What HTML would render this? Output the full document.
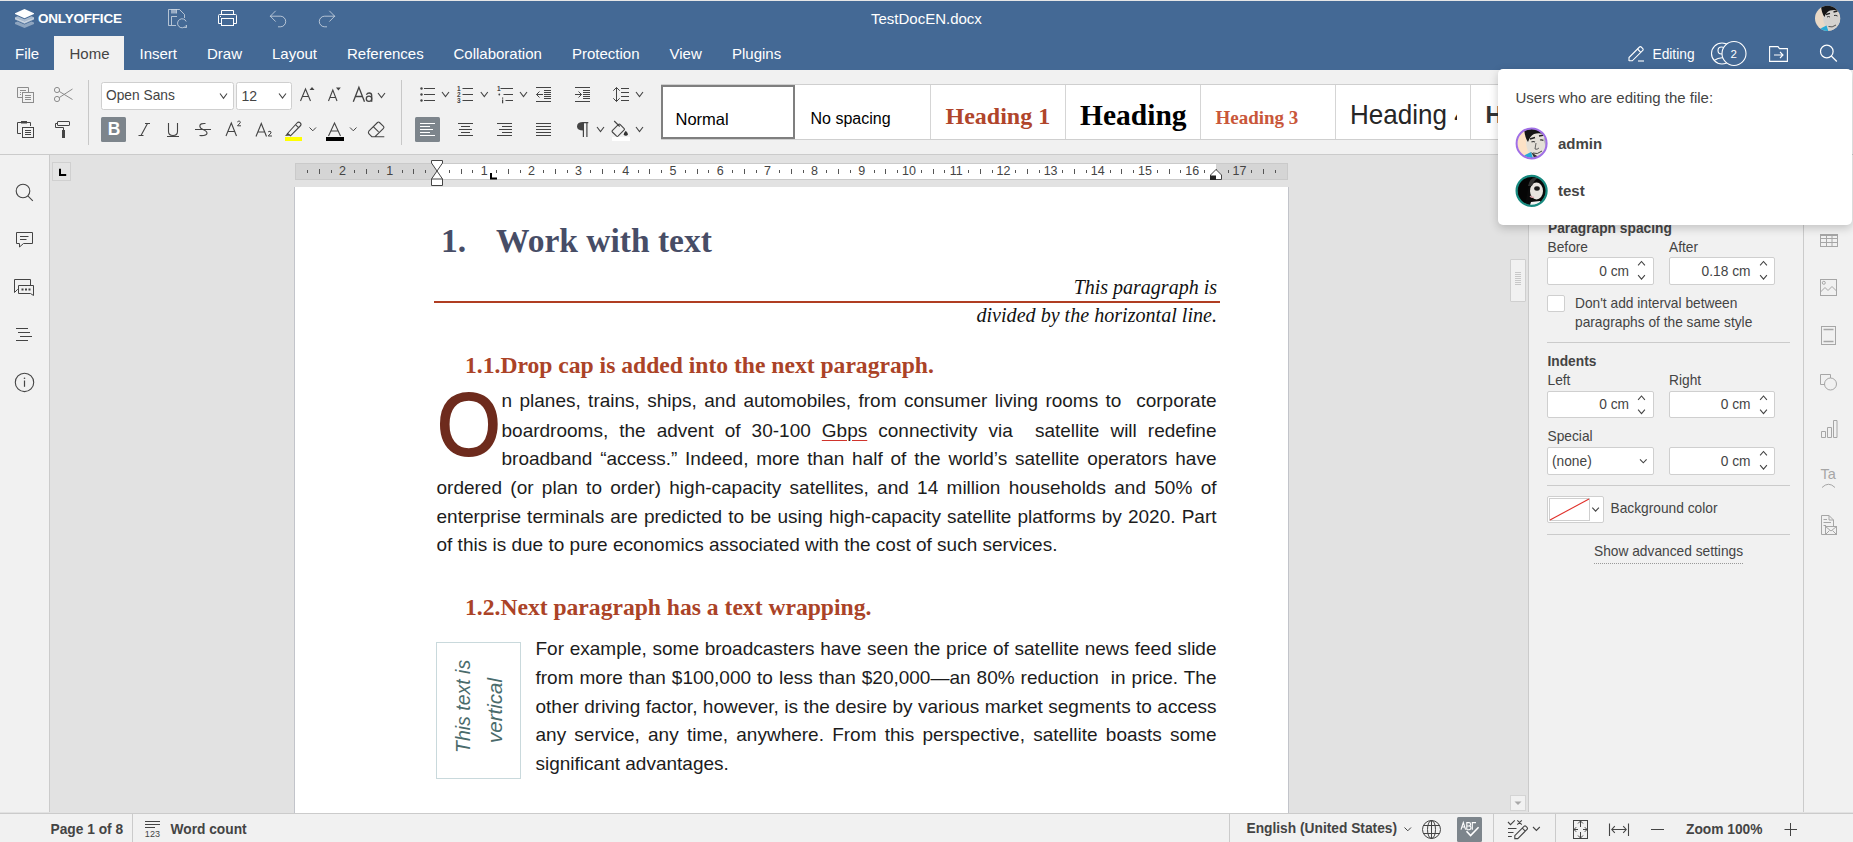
<!DOCTYPE html>
<html><head><meta charset="utf-8">
<style>
*{box-sizing:border-box;margin:0;padding:0}
html,body{width:1853px;height:842px;overflow:hidden;background:#e2e2e2;font-family:"Liberation Sans",sans-serif;color:#444}
.a{position:absolute}
#hdr{left:0;top:0;width:1853px;height:70px;background:#446995;border-top:1px solid #e6e6e6}
.tab{position:absolute;top:36px;height:34px;color:#fff;font-size:15px;line-height:34px;white-space:nowrap}
#tb{left:0;top:70px;width:1853px;height:85px;background:#f1f1f1;border-bottom:1px solid #cbcbcb}
#lsb{left:0;top:155px;width:50px;height:657px;background:#f1f1f1;border-right:1px solid #cbcbcb}
#page{left:294px;top:187px;width:995px;height:626px;background:#fff;border-right:1px solid #c2c4ca;border-left:1px solid #c2c4ca}
.bt{position:absolute;line-height:1;white-space:nowrap;font-size:19px;color:#1c1c1c;text-align:justify;text-align-last:justify}
#rp{left:1528px;top:155px;width:276px;height:657px;background:#f1f1f1;border-left:1px solid #cbcbcb;border-right:1px solid #cbcbcb}
#rbar{left:1804px;top:155px;width:49px;height:657px;background:#f1f1f1}
#sb{left:0;top:813px;width:1853px;height:29px;background:#f1f1f1;border-top:1px solid #cbcbcb}
#pop{left:1498px;top:69px;width:354px;height:156px;background:#fff;border-radius:5px;box-shadow:0 3px 10px rgba(0,0,0,.2)}
svg{position:absolute;overflow:visible}
.t{position:absolute;line-height:1;white-space:nowrap}
</style></head><body>
<div id="hdr" class="a"></div>
<!-- header content -->
<svg style="left:14px;top:9px" width="21" height="19" viewBox="0 0 21 19">
<path d="M10.5 13 L1 9 L1 10.6 L10.5 14.8 L20 10.6 L20 9 Z" fill="#fff" opacity=".6"/>
<path d="M1 8.3 L3.6 7.2 L10.5 10.2 L17.4 7.2 L20 8.3 L20 9.6 L10.5 13.8 L1 9.6 Z" fill="#fff" opacity=".55"/>
<path d="M1 13.6 L3.6 12.5 L10.5 15.5 L17.4 12.5 L20 13.6 L20 14.9 L10.5 19 L1 14.9 Z" fill="#fff" opacity=".4"/>
<path d="M10.5 0 L20 4.2 L20 5 L10.5 9.2 L1 5 L1 4.2 Z" fill="#fff"/>
</svg>
<div class="t" style="left:38px;top:12px;font-size:13.5px;font-weight:bold;color:#fff;letter-spacing:-0.2px">ONLYOFFICE</div>
<svg style="left:160px;top:5px" width="180" height="28" viewBox="160 5 180 28" fill="none" stroke="#fff" stroke-width="1">
<g stroke-opacity=".6"><path d="M184.5 18 V14.5 L179.5 9.5 H168.5 V25.5 H176"/><path d="M171.5 25 V16.5 H177"/><rect x="171" y="9.5" width="5" height="4" fill="#fff" fill-opacity=".45" stroke="none"/><path d="M176.5 9.5 V13.5"/>
<path d="M185.8 25.8 A4.5 4.5 0 1 1 186.2 21.5"/><path d="M184.5 27.5 H186.5 V25"/></g>
<path d="M221.5 14 V10.5 H233.5 V14 M221.5 23.5 H218.5 V15.5 Q218.5 14.5 219.5 14.5 H235.5 Q236.5 14.5 236.5 15.5 V23.5 H233.5"/><rect x="221.5" y="18.5" width="12" height="7"/><rect x="220" y="16" width="1" height="1" fill="#fff" stroke="none"/>
<g stroke-opacity=".6"><path d="M275.7 10.8 L270.3 16.2 L275.7 21.6 M270.3 16.2 H280.4 A5.3 5.3 0 0 1 280.4 26.8 H278"/>
<path d="M329.3 10.8 L334.7 16.2 L329.3 21.6 M334.7 16.2 H324.6 A5.3 5.3 0 0 0 324.6 26.8 H327"/></g>
</svg>
<div class="t" style="left:871px;top:11px;font-size:15px;color:#fff">TestDocEN.docx</div>
<div class="t" style="left:15px;top:45.7px;font-size:15px;color:#fff">File</div>
<div class="a" style="left:54px;top:36px;width:70px;height:34px;background:#f1f1f1"></div>
<div class="t" style="left:69.5px;top:45.7px;font-size:15px;color:#444">Home</div>
<div class="t" style="left:139.5px;top:45.7px;font-size:15px;color:#fff">Insert</div>
<div class="t" style="left:207px;top:45.7px;font-size:15px;color:#fff">Draw</div>
<div class="t" style="left:272px;top:45.7px;font-size:15px;color:#fff">Layout</div>
<div class="t" style="left:347px;top:45.7px;font-size:15px;color:#fff">References</div>
<div class="t" style="left:453.5px;top:45.7px;font-size:15px;color:#fff">Collaboration</div>
<div class="t" style="left:572px;top:45.7px;font-size:15px;color:#fff">Protection</div>
<div class="t" style="left:669.5px;top:45.7px;font-size:15px;color:#fff">View</div>
<div class="t" style="left:732px;top:45.7px;font-size:15px;color:#fff">Plugins</div>
<svg style="left:1628px;top:45px" width="17" height="17" viewBox="0 0 17 17" fill="none" stroke="#fff" stroke-width="1.1">
<path d="M1 16 V12.5 L11.5 2 A1.2 1.2 0 0 1 13.2 2 L14.8 3.6 A1.2 1.2 0 0 1 14.8 5.3 L4.3 15.8 H1 Z"/><path d="M9.5 4 L12.8 7.3"/><path d="M10 16 H16"/>
</svg>
<div class="t" style="left:1652.5px;top:47.8px;font-size:13.75px;color:#fff">Editing</div>
<svg style="left:1710px;top:41px" width="38" height="26" viewBox="0 0 38 26" fill="none" stroke="#fff" stroke-width="1.1">
<circle cx="12" cy="12.5" r="10.5"/><circle cx="11.5" cy="9.5" r="3.5"/><path d="M4 19.5 Q12 14 20 19.5"/>
<circle cx="24" cy="12.5" r="12" fill="#446995"/>
</svg>
<div class="t" style="left:1730.5px;top:48.5px;font-size:11.5px;color:#fff">2</div>
<svg style="left:1769px;top:46px" width="20" height="16" viewBox="0 0 20 16" fill="none" stroke="#fff" stroke-width="1.1">
<path d="M.6 .6 H9 L10.5 2.6 H18.4 V15.4 H.6 Z"/><path d="M5 9 H14 M11 6 L14 9 L11 12"/>
</svg>
<svg style="left:1819px;top:44px" width="20" height="20" viewBox="0 0 20 20" fill="none" stroke="#fff" stroke-width="1.2">
<circle cx="7.8" cy="7.5" r="6.3"/><path d="M12.3 12 L17.8 17.5"/>
</svg>
<div id="tb" class="a"></div>
<!-- toolbar -->
<svg style="left:0;top:70px" width="1500" height="85" viewBox="0 70 1500 85" fill="none" stroke="#444" stroke-width="1">
<!-- copy (disabled) -->
<g stroke="#8c8c8c"><path d="M22.5 97.5 H17.5 V87.5 H28.5 V92"/><rect x="22.5" y="92.5" width="11" height="10"/><path d="M25 95.5 H31 M25 97.5 H31 M25 99.5 H31 M20 90.5 H26"/><path d="M20 92.5 H21 M20 94.5 H21"/></g>
<!-- cut (disabled) -->
<g stroke="#8c8c8c"><circle cx="57" cy="90" r="2.6"/><circle cx="57" cy="99" r="2.6"/><path d="M59.2 91.4 L72.5 99.5 M59.2 97.6 L72.5 89"/></g>
<!-- paste -->
<path d="M21.5 122.5 H17.5 V133.5 H21 M27 122.5 H30.5 V126"/><rect x="21" y="121" width="6" height="2.5" fill="#444" stroke="none"/>
<rect x="22.5" y="127.5" width="11" height="10"/><path d="M25 130.5 H31 M25 132.5 H31 M25 134.5 H31"/>
<!-- painter -->
<rect x="57.5" y="121.5" width="12" height="4" rx=".5"/><path d="M57.5 123.5 H55.5 V127.5 H63.5 V130.5"/><rect x="62" y="130" width="3" height="8" fill="#444" stroke="none"/>
<!-- separators -->
<path d="M88.5 80 V145 M401.5 80 V145" stroke="#c8c8c8"/>
<!-- font combo -->
<rect x="101.5" y="82.5" width="132" height="27" rx="2" fill="#fff" stroke="#cfcfcf"/>
<path d="M220.0 93.5 L223.5 98.3 L227.0 93.5" stroke-width="1.1"/>
<rect x="236.5" y="82.5" width="55" height="27" rx="2" fill="#fff" stroke="#cfcfcf"/>
<path d="M279.0 93.5 L282.5 98.0 L286.0 93.5" stroke-width="1.1"/>
<!-- A+ A- Aa -->
<path d="M300.5 101 L305.5 89 L310.5 101 M302.5 96.5 H308.5" stroke-width="1.1"/><path d="M309.5 90 L312 87 L314.5 90 Z" fill="#444" stroke="none"/>
<path d="M328.5 101 L332.8 90 L337 101 M330 97.5 H335.5" stroke-width="1.1"/><path d="M336 87.5 L338.4 90.5 L340.8 87.5 Z" fill="#444" stroke="none"/>
<path d="M353.3 101.7 L358.9 87.3 L364.5 101.7 M355.3 96.5 H362.5" stroke-width="1.35"/>
<path d="M366.4 94.8 Q367.3 93 369.2 93 Q371.7 93 371.7 95.6 V101.7" stroke-width="1.3"/><ellipse cx="369" cy="98.8" rx="2.7" ry="2.6" stroke-width="1.3"/>
<path d="M378.0 93.0 L381.5 97.5 L385.0 93.0" stroke-width="1.1"/>
<!-- B I U S -->
<rect x="101" y="117" width="25" height="25" rx="1.5" fill="#7d858c" stroke="none"/>
<path d="M145 123.5 H150 M138.5 135.5 H143.5 M147.5 123.5 L141 135.5" stroke-width="1.1"/>
<path d="M168.5 123 V131.5 Q168.5 135.5 173 135.5 Q177.5 135.5 177.5 131.5 V123 M167 136.5 H179" stroke-width="1.1"/>
<path d="M205.5 123.5 Q200 123 199.8 126 Q200 128.5 203 129.5 Q207 131 207 133.3 Q206.5 136 199.5 135.5 M195 129.5 H211" stroke-width="1.1"/>
<!-- superscript -->
<path d="M226 136 L231.3 123 L236.5 136 M227.8 131.5 H234.8" stroke-width="1.1"/>
<path d="M237.3 122 Q238 121 239.3 121.1 Q240.6 121.4 240.3 122.7 L237.5 125.8 H241" stroke-width="1"/>
<!-- subscript -->
<path d="M256 136.5 L261.3 123.5 L266.5 136.5 M257.8 132 H264.8" stroke-width="1.1"/>
<path d="M268 132.2 Q268.6 131.2 270 131.3 Q271.4 131.6 271 133 L268.2 136 H272" stroke-width="1"/>
<!-- highlighter -->
<path d="M287.5 133.5 L297 123 Q298.5 121.3 300.3 122.8 Q301.8 124.5 300.2 126 L290.5 135.8 Z M295.5 124.7 L298.8 127.8" stroke-width="1.1"/><path d="M287.5 133 L285 136 L290 135.5 Z" fill="#444" stroke="none"/>
<rect x="285" y="137" width="17" height="4" fill="#ffff00" stroke="none"/>
<path d="M309.5 127.5 L312.8 130.8 L316 127.5"/>
<!-- font color -->
<path d="M328.5 136 L334.5 123 L340.5 136 M330.8 131 H338.2" stroke-width="1.1"/>
<rect x="326" y="137" width="18" height="4" fill="#000" stroke="none"/>
<path d="M350 127.5 L353.3 130.8 L356.5 127.5"/>
<!-- eraser -->
<path d="M368.8 131.2 L377.5 122.5 Q378.5 121.6 379.5 122.5 L383.5 126.3 Q384.4 127.3 383.5 128.3 L375 136.7 H371.8 L368.8 133.7 Q368 132.5 368.8 131.2 Z M373.5 126.8 L378.6 131.8 M375 136.7 H384.3" stroke-width="1.1"/>
<!-- bullets -->
<g fill="#444" stroke="none"><circle cx="421.5" cy="88.5" r="1.2"/><circle cx="421.5" cy="94.5" r="1.2"/><circle cx="421.5" cy="100.5" r="1.2"/></g>
<path d="M424 88.5 H435 M424 94.5 H435 M424 100.5 H435"/>
<path d="M442.0 92.0 L445.5 96.5 L449.0 92.0" stroke-width="1.1"/>
<!-- numbered -->
<path d="M462.5 88.5 H473 M462.5 94.5 H473 M462.5 100.5 H473"/>
<path d="M480.8 92.0 L484.3 96.5 L487.8 92.0" stroke-width="1.1"/>
<!-- multilevel -->
<path d="M500.5 88.5 H513 M503.5 94.5 H513 M505.5 100.5 H513"/>
<path d="M520.0 92.0 L523.5 96.5 L527.0 92.0" stroke-width="1.1"/>
<g fill="#444" stroke="none"><circle cx="499.3" cy="94.5" r=".9"/></g>
<!-- decrease indent -->
<path d="M536 87.5 H551 M544 90.5 H551 M544 92.5 H551 M544 94.5 H551 M544 96.5 H551 M544 98.5 H551 M536 101.5 H551 M536.5 94.5 H543 M539.5 91.5 L536.5 94.5 L539.5 97.5"/>
<!-- increase indent -->
<path d="M575 87.5 H590 M583 90.5 H590 M583 92.5 H590 M583 94.5 H590 M583 96.5 H590 M583 98.5 H590 M575 101.5 H590 M575 94.5 H581.5 M578.5 91.5 L581.5 94.5 L578.5 97.5"/>
<!-- line spacing -->
<path d="M616.5 87.5 V101.5 M613.3 90.7 L616.5 87.5 L619.7 90.7 M613.3 98.3 L616.5 101.5 L619.7 98.3 M621 88.5 H629 M621 92.5 H629 M621 96.5 H629 M621 100.5 H629"/>
<path d="M636.0 92.0 L639.5 96.5 L643.0 92.0" stroke-width="1.1"/>
<!-- align -->
<rect x="415" y="117" width="25" height="25" rx="1.5" fill="#7d858c" stroke="none"/>
<path d="M420 123.5 H435 M420 126.5 H430 M420 129.5 H433 M420 132.5 H430 M420 135.5 H435" stroke="#fff"/>
<path d="M458 123.5 H473 M461 126.5 H470 M459 129.5 H472 M461 132.5 H470 M458 135.5 H473"/>
<path d="M497 123.5 H512 M502 126.5 H512 M499 129.5 H512 M502 132.5 H512 M497 135.5 H512"/>
<path d="M536 123.5 H551 M536 126.5 H551 M536 129.5 H551 M536 132.5 H551 M536 135.5 H551"/>
<!-- pilcrow -->
<path d="M586.9 122 V137 M583.4 122 V137 M582.5 122.6 H588.3" stroke-width="1.2"/><path d="M583.4 122 Q577 122 577 126.3 Q577 130.6 583.4 130.6 Z" fill="#444" stroke="none"/>
<path d="M597.0 127.0 L600.5 131.5 L604.0 127.0" stroke-width="1.1"/>
<!-- bucket -->
<path d="M612.3 130.6 L618.5 124.4 Q619.3 123.8 620 124.4 L624.2 128.6 Q624.8 129.3 624.2 130 L618 136.2 Q617.3 136.8 616.6 136.2 L612.3 132 Q611.7 131.3 612.3 130.6 Z M614.2 121 L619.7 126.5" stroke-width="1.1"/>
<path d="M625.8 130.8 Q623.6 133.2 623.8 134.3 Q624.2 135.8 625.8 135.8 Q627.4 135.8 627.8 134.3 Q628 133.2 625.8 130.8 Z" fill="#333" stroke="none"/>
<rect x="612" y="137" width="18" height="4" fill="#fff" stroke="none"/>
<path d="M636.0 127.0 L639.5 131.5 L643.0 127.0" stroke-width="1.1"/>
<!-- styles gallery -->
<rect x="661.5" y="84.5" width="840" height="55" fill="#fff" stroke="#cfcfcf"/>
<path d="M930.5 85 V139 M1065.5 85 V139 M1200.5 85 V139 M1335.5 85 V139 M1470.5 85 V139" stroke="#d5d5d5"/>
<rect x="662" y="86" width="132" height="52" stroke="#7f7f7f" stroke-width="2"/>
</svg>
<div class="t" style="left:106px;top:89px;font-size:13.75px;color:#444">Open Sans</div>
<div class="t" style="left:241.5px;top:89px;font-size:14px;color:#444">12</div>
<div class="t" style="left:107.8px;top:121px;font-size:17.5px;font-weight:bold;color:#fff">B</div>
<div class="t" style="left:457px;top:86px;font-size:6.5px;font-weight:bold;color:#444;line-height:6px;width:6px">1<br>2<br>3</div>
<div class="t" style="left:497px;top:86px;font-size:6.5px;font-weight:bold;color:#444">1</div>
<svg style="left:500px;top:96px" width="6" height="8" viewBox="500 96 6 8"><rect x="502" y="97.5" width="1.2" height="1.2" fill="#444"/><rect x="502" y="99.5" width="1.2" height="3.8" fill="#444"/></svg>
<div class="t" style="left:675.5px;top:110.5px;font-size:16.5px;color:#000">Normal</div>
<div class="t" style="left:810.5px;top:110.5px;font-size:16px;color:#000">No spacing</div>
<div class="t" style="left:945.5px;top:103.5px;font-size:24px;font-family:'Liberation Serif',serif;font-weight:bold;color:#b0452b">Heading 1</div>
<div class="t" style="left:1080px;top:100.5px;font-size:29.5px;font-family:'Liberation Serif',serif;font-weight:bold;color:#000">Heading</div>
<div class="t" style="left:1215.5px;top:107.5px;font-size:19px;font-family:'Liberation Serif',serif;font-weight:bold;color:#c9573a">Heading 3</div>
<div class="a" style="left:1350px;top:90px;width:107px;height:45px;overflow:hidden"><div class="t" style="left:0;top:10.7px;font-size:28px;color:#262626;transform:scaleX(0.93);transform-origin:0 0">Heading 4</div></div>
<div class="t" style="left:1485.5px;top:104.3px;font-size:23.5px;font-weight:bold;color:#333">H</div>
<div id="lsb" class="a"></div>
<svg style="left:0;top:155px" width="50" height="260" viewBox="0 155 50 260" fill="none" stroke="#444" stroke-width="1.1">
<circle cx="23" cy="191" r="6.8"/><path d="M27.8 195.8 L32.8 200.8"/>
<path d="M16.5 232.5 H32.5 V243.5 H23.5 L19.5 247 V243.5 H16.5 Z" stroke-width="1"/><path d="M20 236.5 H28.5 M20 239.5 H26.5" stroke-width="1"/>
<path d="M30.5 285 V279.5 H14.5 V292.5 L17.5 289.5 H18" stroke-width="1"/>
<path d="M18.5 285.5 H33.5 V295.5 L30.5 293.5 H18.5 Z" stroke-width="1"/>
<g fill="#444" stroke="none"><rect x="21.5" y="288.5" width="2" height="2"/><rect x="25" y="288.5" width="2" height="2"/><rect x="28.5" y="288.5" width="2" height="2"/></g>
<path d="M16 328.5 H28 M18 332.5 H30 M20 336.5 H32 M16 340.5 H28" stroke-width="1"/>
<circle cx="24.5" cy="382.4" r="9.2"/><path d="M24.5 380.5 V386.8" stroke-width="1.2"/><circle cx="24.5" cy="378.2" r=".8" fill="#444" stroke="none"/>
</svg>
<div id="page" class="a"></div>
<svg style="left:50px;top:155px" width="1478" height="35" viewBox="50 155 1478 35">
<rect x="52.5" y="162.5" width="18" height="18" fill="#e4e4e4" stroke="#d0d0d0"/>
<path d="M60 168.8 V175 H66.2" stroke="#000" stroke-width="2" fill="none"/>
<rect x="295.5" y="163.5" width="992" height="16" fill="#d5d5d5" stroke="#cacaca"/>
<rect x="437" y="164" width="779" height="15" fill="#fff"/>
<path d="M307.5 170 V173 M319.5 169 V174 M331.5 170 V173 M354.5 170 V173 M366.5 169 V174 M378.5 170 V173 M402.5 170 V173 M413.5 169 V174 M425.5 170 V173 M449.5 170 V173 M461.5 169 V174 M472.5 170 V173 M496.5 170 V173 M508.5 169 V174 M520.5 170 V173 M543.5 170 V173 M555.5 169 V174 M567.5 170 V173 M590.5 170 V173 M602.5 169 V174 M614.5 170 V173 M638.5 170 V173 M649.5 169 V174 M661.5 170 V173 M685.5 170 V173 M697.5 169 V174 M708.5 170 V173 M732.5 170 V173 M744.5 169 V174 M756.5 170 V173 M779.5 170 V173 M791.5 169 V174 M803.5 170 V173 M826.5 170 V173 M838.5 169 V174 M850.5 170 V173 M874.5 170 V173 M885.5 169 V174 M897.5 170 V173 M921.5 170 V173 M933.5 169 V174 M944.5 170 V173 M968.5 170 V173 M980.5 169 V174 M992.5 170 V173 M1015.5 170 V173 M1027.5 169 V174 M1039.5 170 V173 M1062.5 170 V173 M1074.5 169 V174 M1086.5 170 V173 M1110.5 170 V173 M1121.5 169 V174 M1133.5 170 V173 M1157.5 170 V173 M1169.5 169 V174 M1180.5 170 V173 M1204.5 170 V173 M1216.5 169 V174 M1228.5 170 V173 M1251.5 170 V173 M1263.5 169 V174 M1275.5 170 V173" stroke="#555" stroke-width="1"/>
<text x="342.6" y="175.3" text-anchor="middle" font-family="Liberation Sans" font-size="12.5" fill="#444">2</text>
<text x="389.8" y="175.3" text-anchor="middle" font-family="Liberation Sans" font-size="12.5" fill="#444">1</text>
<text x="484.2" y="175.3" text-anchor="middle" font-family="Liberation Sans" font-size="12.5" fill="#444">1</text>
<text x="531.4" y="175.3" text-anchor="middle" font-family="Liberation Sans" font-size="12.5" fill="#444">2</text>
<text x="578.6" y="175.3" text-anchor="middle" font-family="Liberation Sans" font-size="12.5" fill="#444">3</text>
<text x="625.8" y="175.3" text-anchor="middle" font-family="Liberation Sans" font-size="12.5" fill="#444">4</text>
<text x="673.0" y="175.3" text-anchor="middle" font-family="Liberation Sans" font-size="12.5" fill="#444">5</text>
<text x="720.2" y="175.3" text-anchor="middle" font-family="Liberation Sans" font-size="12.5" fill="#444">6</text>
<text x="767.4" y="175.3" text-anchor="middle" font-family="Liberation Sans" font-size="12.5" fill="#444">7</text>
<text x="814.6" y="175.3" text-anchor="middle" font-family="Liberation Sans" font-size="12.5" fill="#444">8</text>
<text x="861.8" y="175.3" text-anchor="middle" font-family="Liberation Sans" font-size="12.5" fill="#444">9</text>
<text x="909.0" y="175.3" text-anchor="middle" font-family="Liberation Sans" font-size="12.5" fill="#444">10</text>
<text x="956.2" y="175.3" text-anchor="middle" font-family="Liberation Sans" font-size="12.5" fill="#444">11</text>
<text x="1003.4" y="175.3" text-anchor="middle" font-family="Liberation Sans" font-size="12.5" fill="#444">12</text>
<text x="1050.6" y="175.3" text-anchor="middle" font-family="Liberation Sans" font-size="12.5" fill="#444">13</text>
<text x="1097.8" y="175.3" text-anchor="middle" font-family="Liberation Sans" font-size="12.5" fill="#444">14</text>
<text x="1145.0" y="175.3" text-anchor="middle" font-family="Liberation Sans" font-size="12.5" fill="#444">15</text>
<text x="1192.2" y="175.3" text-anchor="middle" font-family="Liberation Sans" font-size="12.5" fill="#444">16</text>
<text x="1239.4" y="175.3" text-anchor="middle" font-family="Liberation Sans" font-size="12.5" fill="#444">17</text>
<path d="M431.5 160.5 H442.5 V163 L437 171 L442.5 179 V185.5 H431.5 V179 L437 171 L431.5 163 Z M431.5 179 H442.5" fill="#fff" stroke="#444" stroke-width="1"/>
<path d="M1210.5 179.5 V175 L1216 169.5 L1221.5 175 V179.5 Z" fill="#fff" stroke="#444" stroke-width="1"/><rect x="1210" y="175.5" width="6" height="4.5" fill="#222"/>
<path d="M491 173 V178.5 H497" stroke="#000" stroke-width="2" fill="none"/>
</svg>
<div class="t" style="left:441px;top:223.6px;font-size:33.5px;font-family:'Liberation Serif',serif;font-weight:bold;color:#474d66">1.</div>
<div class="t" style="left:496px;top:223.6px;font-size:33.5px;font-family:'Liberation Serif',serif;font-weight:bold;color:#474d66">Work with text</div>
<div class="t" style="left:900px;width:317px;text-align:right;top:276.6px;font-size:20px;font-family:'Liberation Serif',serif;font-style:italic;color:#111">This paragraph is</div>
<div class="a" style="left:434px;top:301px;width:786px;height:2px;background:#b03d22"></div>
<div class="t" style="left:900px;width:317px;text-align:right;top:304.8px;font-size:20.1px;font-family:'Liberation Serif',serif;font-style:italic;color:#111">divided by the horizontal line.</div>
<div class="t" style="left:465px;top:354px;font-size:23.6px;font-family:'Liberation Serif',serif;font-weight:bold;color:#ab4327">1.1.Drop cap is added into the next paragraph.</div>
<div class="t" style="left:437px;top:380px;font-size:89px;color:#6e2b1d;-webkit-text-stroke:2px #6e2b1d;transform:scaleX(0.92);transform-origin:0 0">O</div>
<div class="bt" style="left:501.5px;top:391.4px;width:715.0px;">n planes, trains, ships, and automobiles, from consumer living rooms to &nbsp;corporate</div>
<div class="bt" style="left:501.5px;top:420.5px;width:715.0px;">boardrooms, the advent of 30-100 <span style="text-decoration:underline;text-decoration-color:#d0342c;text-underline-offset:3px">Gbps</span> connectivity via &nbsp;satellite will redefine</div>
<div class="bt" style="left:501.5px;top:449.1px;width:715.0px;">broadband “access.” Indeed, more than half of the world’s satellite operators have</div>
<div class="bt" style="left:436.5px;top:477.9px;width:780.0px;">ordered (or plan to order) high-capacity satellites, and 14 million households and 50% of</div>
<div class="bt" style="left:436.5px;top:506.7px;width:780.0px;">enterprise terminals are predicted to be using high-capacity satellite platforms by 2020. Part</div>
<div class="bt" style="left:436.5px;top:535.4px;width:780.0px;text-align:left;text-align-last:left;">of this is due to pure economics associated with the cost of such services.</div>
<div class="t" style="left:465px;top:595.5px;font-size:23.6px;font-family:'Liberation Serif',serif;font-weight:bold;color:#ab4327">1.2.Next paragraph has a text wrapping.</div>
<div class="a" style="left:436px;top:642px;width:85px;height:137px;border:1px solid #c9d9dc"></div>
<div class="t" style="left:454px;top:752.5px;font-size:19.5px;font-style:italic;color:#4a6b6b;transform:rotate(-90deg);transform-origin:0 0">This text is</div>
<div class="t" style="left:485px;top:742.5px;font-size:20.5px;font-style:italic;color:#4a6b6b;transform:rotate(-90deg);transform-origin:0 0">vertical</div>
<div class="bt" style="left:535.5px;top:638.6px;width:681.0px;">For example, some broadcasters have seen the price of satellite news feed slide</div>
<div class="bt" style="left:535.5px;top:667.7px;width:681.0px;">from more than $100,000 to less than $20,000—an 80% reduction &nbsp;in price. The</div>
<div class="bt" style="left:535.5px;top:696.6px;width:681.0px;">other driving factor, however, is the desire by various market segments to access</div>
<div class="bt" style="left:535.5px;top:725.4px;width:681.0px;">any service, any time, anywhere. From this perspective, satellite boasts some</div>
<div class="bt" style="left:535.5px;top:753.9px;width:681.0px;text-align:left;text-align-last:left;">significant advantages.</div>
<div id="rp" class="a"></div>
<!-- scrollbar -->
<div class="a" style="left:1510px;top:259px;width:16px;height:43px;background:#f1f1f1;border:1px solid #cfcfcf;border-radius:1px"></div>
<svg style="left:1510px;top:259px" width="16" height="42" viewBox="1510 259 16 42"><path d="M1515 272.5 H1521 M1515 274.5 H1521 M1515 276.5 H1521 M1515 278.5 H1521 M1515 280.5 H1521 M1515 282.5 H1521 M1515 284.5 H1521" stroke="#c8c8c8" stroke-width="1"/></svg>
<div class="a" style="left:1510px;top:795px;width:16px;height:16px;background:#f1f1f1;border:1px solid #d4d4d4"></div>
<svg style="left:1510px;top:795px" width="16" height="16" viewBox="1510 795 16 16"><path d="M1514.5 801.5 L1518 805 L1521.5 801.5 Z" fill="#a8a8a8"/></svg>
<!-- right panel content -->
<div class="t" style="left:1548px;top:221.5px;font-size:13.75px;font-weight:bold;color:#444">Paragraph spacing</div>
<div class="t" style="left:1547.5px;top:240.5px;font-size:13.75px;color:#444">Before</div>
<div class="t" style="left:1669px;top:240.5px;font-size:13.75px;color:#444">After</div>
<div class="a" style="left:1547px;top:257px;width:107px;height:28px;background:#fff;border:1px solid #cfcfcf;border-radius:2px"></div>
<div class="a" style="left:1669px;top:257px;width:106px;height:28px;background:#fff;border:1px solid #cfcfcf;border-radius:2px"></div>
<div class="t" style="left:1560px;width:69px;text-align:right;top:264.5px;font-size:13.75px;color:#444">0 cm</div>
<div class="t" style="left:1680px;width:70.5px;text-align:right;top:264.5px;font-size:13.75px;color:#444">0.18 cm</div>
<div class="a" style="left:1547px;top:295px;width:18px;height:17px;background:#fff;border:1px solid #cfcfcf;border-radius:2px"></div>
<div class="t" style="left:1575px;top:296.5px;font-size:13.75px;color:#444">Don't add interval between</div>
<div class="t" style="left:1547px;top:315.5px;font-size:13.75px;color:#444;left:1575px">paragraphs of the same style</div>
<div class="a" style="left:1547px;top:342px;width:243px;height:1px;background:#cbcbcb"></div>
<div class="t" style="left:1547.5px;top:354.5px;font-size:13.75px;font-weight:bold;color:#444">Indents</div>
<div class="t" style="left:1547.5px;top:373.5px;font-size:13.75px;color:#444">Left</div>
<div class="t" style="left:1669px;top:373.5px;font-size:13.75px;color:#444">Right</div>
<div class="a" style="left:1547px;top:391px;width:107px;height:27px;background:#fff;border:1px solid #cfcfcf;border-radius:2px"></div>
<div class="a" style="left:1669px;top:391px;width:106px;height:27px;background:#fff;border:1px solid #cfcfcf;border-radius:2px"></div>
<div class="t" style="left:1560px;width:69px;text-align:right;top:398px;font-size:13.75px;color:#444">0 cm</div>
<div class="t" style="left:1680px;width:70.5px;text-align:right;top:398px;font-size:13.75px;color:#444">0 cm</div>
<div class="t" style="left:1547.5px;top:429.5px;font-size:13.75px;color:#444">Special</div>
<div class="a" style="left:1547px;top:447px;width:107px;height:28px;background:#fff;border:1px solid #cfcfcf;border-radius:2px"></div>
<div class="t" style="left:1552px;top:454.5px;font-size:13.75px;color:#444">(none)</div>
<div class="a" style="left:1669px;top:447px;width:106px;height:28px;background:#fff;border:1px solid #cfcfcf;border-radius:2px"></div>
<div class="t" style="left:1680px;width:70.5px;text-align:right;top:454.5px;font-size:13.75px;color:#444">0 cm</div>
<div class="a" style="left:1547px;top:485px;width:243px;height:1px;background:#cbcbcb"></div>
<div class="a" style="left:1547px;top:496px;width:57px;height:27px;background:#fff;border:1px solid #cfcfcf;border-radius:2px"></div>
<div class="t" style="left:1610.5px;top:502px;font-size:13.75px;color:#444">Background color</div>
<div class="a" style="left:1547px;top:534px;width:243px;height:1px;background:#cbcbcb"></div>
<div class="t" style="left:1594px;top:545px;font-size:13.75px;color:#444">Show advanced settings</div>
<svg style="left:1528px;top:155px" width="276" height="420" viewBox="1528 155 276 420" fill="none" stroke="#444" stroke-width="1">
<path d="M1638.1 265.4 L1641.5 261.5 L1644.9 265.4 M1638.1 275.2 L1641.5 279.1 L1644.9 275.2" stroke-width="1.1"/>
<path d="M1760.1 265.4 L1763.5 261.5 L1766.9 265.4 M1760.1 275.2 L1763.5 279.1 L1766.9 275.2" stroke-width="1.1"/>
<path d="M1638.1 399.9 L1641.5 396 L1644.9 399.9 M1638.1 409.7 L1641.5 413.6 L1644.9 409.7" stroke-width="1.1"/>
<path d="M1760.1 399.9 L1763.5 396 L1766.9 399.9 M1760.1 409.7 L1763.5 413.6 L1766.9 409.7" stroke-width="1.1"/>
<path d="M1760.1 455.4 L1763.5 451.5 L1766.9 455.4 M1760.1 465.2 L1763.5 469.1 L1766.9 465.2" stroke-width="1.1"/>
<path d="M1640 459.3 L1643.3 462.8 L1646.6 459.3" stroke-width="1.1"/>
<path d="M1592.3 507.6 L1595.6 511.2 L1598.9 507.6" stroke-width="1.1"/>
<rect x="1549.5" y="498.5" width="40" height="22" stroke="#cfcfcf"/>
<path d="M1550 520 L1589 499" stroke="#e0302a" stroke-width="1.1"/>
<path d="M1594 563.5 H1743" stroke="#999" stroke-dasharray="1 1"/>
</svg>
<div id="rbar" class="a"></div>
<svg style="left:1804px;top:155px" width="49" height="400" viewBox="1804 155 49 400" fill="none" stroke="#a6a6a6" stroke-width="1">
<rect x="1820.5" y="234.5" width="17" height="12"/><path d="M1820.5 238.5 H1837.5 M1820.5 242.5 H1837.5 M1826.5 234.5 V246.5 M1832 234.5 V246.5"/><path d="M1820.5 235 H1837.5" stroke-width="2"/>
<rect x="1820.5" y="279.5" width="16" height="16"/><circle cx="1823.8" cy="282.8" r="1.5"/><path d="M1820.5 292 L1825 287.5 L1828 290.5 L1832 286.5 L1836.5 291"/>
<rect x="1821.5" y="326.5" width="14" height="18"/><path d="M1823.5 329.5 H1833.5 M1823.5 341.5 H1833.5" stroke-width="1.3"/>
<path d="M1830.5 378 V374.5 H1820.5 V384.5 H1824.5"/><circle cx="1830.5" cy="384" r="6"/>
<path d="M1821.5 431.5 H1825.5 V437.5 H1821.5 Z M1827.5 427.5 H1831.5 V437.5 H1827.5 Z M1833.5 420.5 H1837 V437.5 H1833.5 Z"/>
<path d="M1822 487.5 Q1828.5 481 1835 487.5"/>
<path d="M1825 534.5 H1821.5 V515.5 H1829 L1833.5 520 V526"/><path d="M1829 515.5 V520 H1833.5"/><path d="M1823.5 519.5 H1827 M1823.5 522.5 H1831 M1823.5 525.5 H1826"/><rect x="1825.5" y="526.5" width="11" height="8"/><path d="M1825.5 526.5 L1831 531 L1836.5 526.5 M1825.5 534.5 L1829.5 530.5 M1836.5 534.5 L1832.5 530.5"/>
</svg>
<div class="t" style="left:1820.5px;top:467px;font-size:14.5px;color:#a6a6a6;-webkit-font-smoothing:antialiased">Ta</div>
<div id="sb" class="a"></div>
<div class="t" style="left:50.5px;top:822.5px;font-size:13.75px;font-weight:bold;color:#444">Page 1 of 8</div>
<div class="t" style="left:170.5px;top:822.5px;font-size:13.75px;font-weight:bold;color:#444">Word count</div>
<div class="t" style="left:1246.5px;top:821.5px;font-size:13.75px;font-weight:bold;color:#444">English (United States)</div>
<div class="t" style="left:1686px;top:822.5px;font-size:13.75px;font-weight:bold;color:#444">Zoom 100%</div>
<svg style="left:0;top:812px" width="1853" height="30" viewBox="0 812 1853 30" fill="none" stroke="#444" stroke-width="1">
<path d="M132.5 814 V842 M1229.5 814 V842 M1493.5 814 V842 M1555.5 814 V842" stroke="#cbcbcb"/>
<path d="M145 821.5 H160 M145 824.5 H160 M145 827.5 H155"/>
<text x="144.8" y="836.9" font-family="Liberation Sans" font-size="9" fill="#444" stroke="none" textLength="15.2" lengthAdjust="spacing">123</text>
<path d="M1404.5 827.5 L1407.8 830.8 L1411 827.5"/>
<circle cx="1431.5" cy="829.5" r="9"/><ellipse cx="1431.5" cy="829.5" rx="4" ry="9"/><path d="M1431.5 820.5 V838.5 M1423.5 825.5 H1439.5 M1423.5 833.5 H1439.5"/>
<rect x="1457" y="817" width="25" height="25" rx="1.5" fill="#7d858c" stroke="none"/>
<g stroke="#fff" stroke-width="1.1"><path d="M1461 829.7 L1463.3 822.5 L1465.6 829.7 M1462 827 H1464.6"/><path d="M1466.8 829.7 V822.6 H1469 Q1470.6 822.6 1470.6 824.3 Q1470.6 826 1469 826 H1466.8 M1469 826 Q1471 826 1471 827.8 Q1471 829.7 1469 829.7 H1466.8"/><path d="M1472.3 829.7 V822.6 H1476"/></g>
<path d="M1466.5 831.3 L1470.6 835.6 L1478.6 827.3" stroke="#fff" stroke-width="1.6"/>
<path d="M1508 822 L1510.5 824.6 L1514.8 820.3 M1517.3 820.3 L1521.8 824.6 M1521.8 820.3 L1517.3 824.6" stroke-width="1.1"/>
<path d="M1508 828.5 H1516.5 M1508 832.5 H1513.5 M1508 836.5 H1511.8" stroke-width="1"/>
<path d="M1514.8 835.6 L1524 826.4 Q1525 825.4 1526 826.4 L1527 827.4 Q1528 828.4 1527 829.4 L1517.8 838.6 H1514.8 Z M1522.3 828.1 L1525.3 831.1" stroke-width="1.1"/>
<path d="M1533 827 L1536.4 830.4 L1539.8 827" stroke-width="1.1"/>
<rect x="1573.5" y="820.5" width="14" height="18"/>
<path d="M1580.5 821 V827 M1578 823.5 L1580.5 821 L1583 823.5 M1580.5 838 V832 M1578 835.5 L1580.5 838 L1583 835.5 M1574 829.5 H1578 M1576.2 827.2 L1574 829.5 L1576.2 831.8 M1587 829.5 H1583 M1584.8 827.2 L1587 829.5 L1584.8 831.8" stroke-width="1"/>
<path d="M1609.5 823.5 V836 M1628.5 823.5 V836 M1612 829.5 H1626 M1614.8 826.2 L1611.8 829.5 L1614.8 832.8 M1623.2 826.2 L1626.2 829.5 L1623.2 832.8" stroke-width="1.1"/>
<path d="M1651 829.5 H1664"/>
<path d="M1784.5 829.5 H1797 M1790.5 823 V836"/>
</svg>
<div id="pop" class="a"></div>
<div class="t" style="left:1515.5px;top:90px;font-size:15px;color:#444">Users who are editing the file:</div>
<div class="t" style="left:1558px;top:135.8px;font-size:15px;font-weight:bold;color:#444">admin</div>
<div class="t" style="left:1558px;top:183px;font-size:15px;font-weight:bold;color:#444">test</div>
<svg style="left:1513px;top:125px" width="38" height="85" viewBox="1513 125 38 85">
<defs><clipPath id="c1"><circle cx="1531.6" cy="143.4" r="14.5"/></clipPath><clipPath id="c2"><circle cx="1531.6" cy="190.8" r="14.5"/></clipPath></defs>
<g clip-path="url(#c1)"><rect x="1515" y="127" width="34" height="34" fill="#fde2c6"/>
<ellipse cx="1537" cy="145" rx="10.5" ry="14" transform="rotate(-18 1537 145)" fill="#e4e0d8"/>
<path d="M1524 129 Q1532 126 1543 129 L1548 136 Q1541 132 1534 134 Q1530 136 1528 142 Q1525 138 1524 129 Z" fill="#151515"/>
<path d="M1530 139 L1535 137.5 M1539 136 L1544 135" stroke="#222" stroke-width="1.6"/>
<path d="M1531.5 142 Q1533 141 1535 142 M1540 140 Q1542 139.5 1543.5 140.5" stroke="#333" stroke-width="1.2" fill="none"/>
<path d="M1536 143 L1535 149 Q1537 150 1539 148" stroke="#555" stroke-width=".9" fill="none"/>
<path d="M1533 153 Q1537 155 1542 151" stroke="#444" stroke-width="1" fill="none"/>
<path d="M1543 139 Q1547 147 1544 155 L1548 150 V136 Z" fill="#bbb"/>
<path d="M1521 161 L1525 155 L1531 152 L1534 161 Z" fill="#27a9d6"/><path d="M1531 152 L1536 161 H1540 L1537 156 Z" fill="#333"/>
</g>
<circle cx="1531.6" cy="143.4" r="15" fill="none" stroke="#a06fe6" stroke-width="2"/>
<g clip-path="url(#c2)"><rect x="1515" y="174" width="34" height="34" fill="#0a0a0a"/>
<ellipse cx="1536.5" cy="191" rx="6.5" ry="8.5" fill="#e8e4e0"/>
<path d="M1520 178 Q1532 172 1544 180 Q1540 183 1534 181 Q1528 185 1527 195 Q1526 202 1523 208 L1518 208 Z" fill="#050505"/>
<path d="M1528 186 Q1530 176 1538 178 Q1534 180 1532 186 Z" fill="#333"/>
<ellipse cx="1537" cy="188.5" rx="2.8" ry="2.2" fill="#1a1a1a"/>
<path d="M1530 196 Q1532 198 1534 197" stroke="#d9a0a8" stroke-width="1.2" fill="none"/>
<path d="M1529 208 L1531 202 L1540 201 L1543 208 Z" fill="#f2f2f2"/>
</g>
<circle cx="1531.6" cy="190.8" r="15" fill="none" stroke="#17897f" stroke-width="2.2"/>
</svg>
<svg style="left:1814px;top:5px" width="28" height="28" viewBox="1814 5 28 28">
<defs><clipPath id="c3"><circle cx="1827.6" cy="18.3" r="12.6"/></clipPath></defs>
<g clip-path="url(#c3)"><rect x="1814" y="5" width="28" height="28" fill="#e9d9c6"/>
<ellipse cx="1832" cy="20" rx="8.5" ry="11.5" transform="rotate(-18 1832 20)" fill="#d4d2ce"/>
<path d="M1821 6 Q1828 3.5 1838 6 L1842 12 Q1836 9 1830 10.5 Q1826 12 1824.5 17 Q1821.5 13 1821 6 Z" fill="#151515"/>
<path d="M1826 14.5 L1830 13.3 M1833.5 12 L1837.5 11" stroke="#222" stroke-width="1.4"/>
<path d="M1827 17 Q1828.5 16 1830 17 M1834 15.5 Q1836 15 1837.5 16" stroke="#333" stroke-width="1" fill="none"/>
<path d="M1828.5 26.5 Q1832 28 1836 25" stroke="#444" stroke-width=".9" fill="none"/>
<path d="M1818 33 L1821.5 28 L1826.5 25.5 L1829 33 Z" fill="#27a9d6"/>
</g>
</svg>
</body></html>
